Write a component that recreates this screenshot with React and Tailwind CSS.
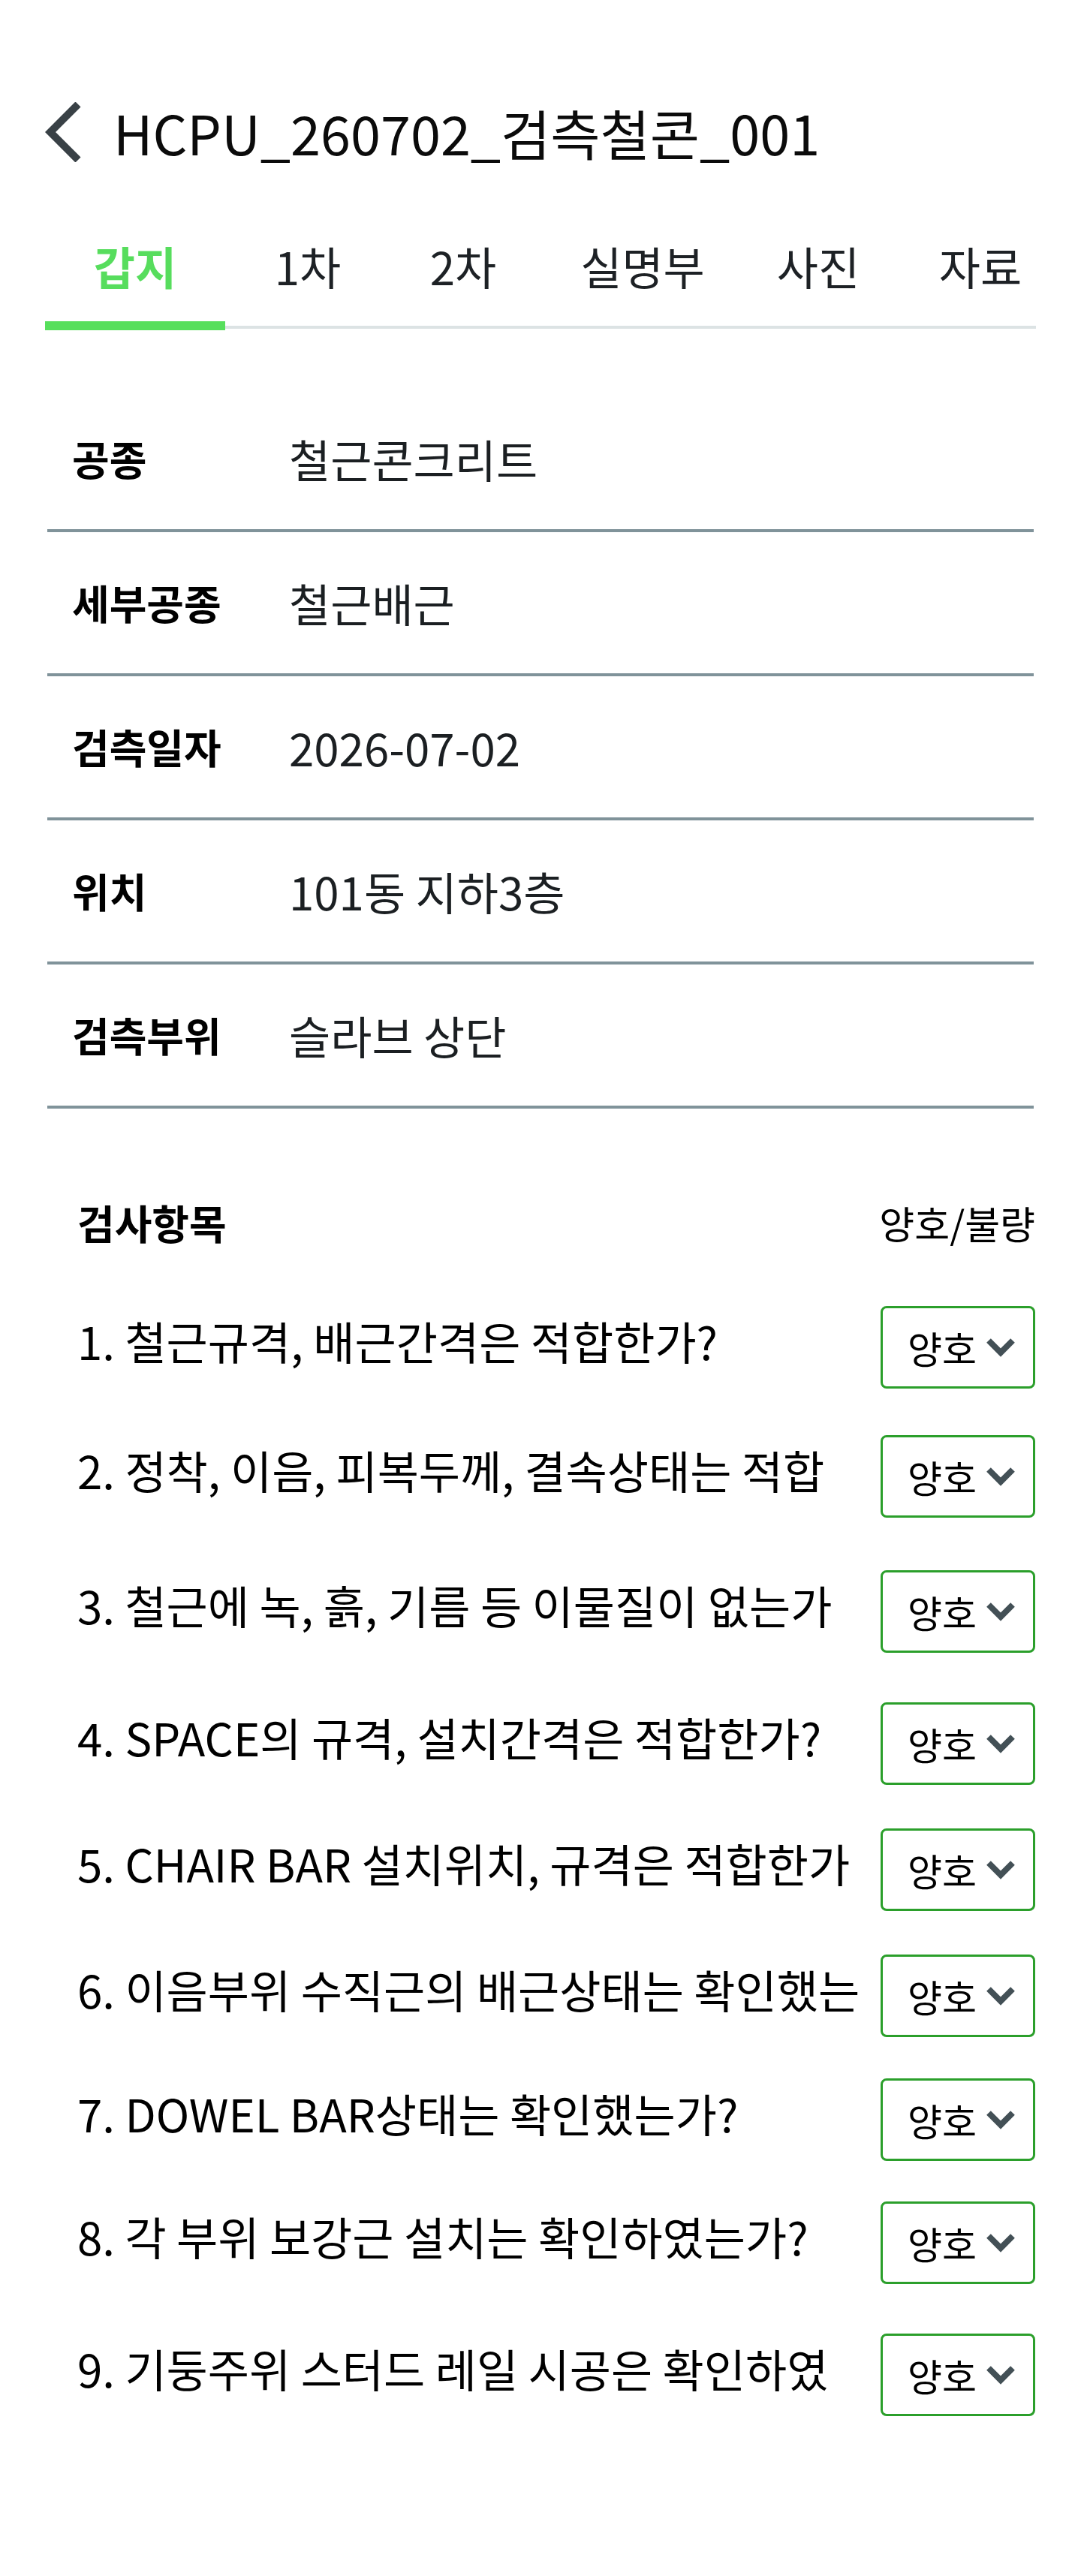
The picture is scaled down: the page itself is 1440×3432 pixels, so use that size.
import React, { useState } from "react";

const tabs = [
  { label: "갑지", width: "w-[240px]" },
  { label: "1차", width: "w-[220px]" },
  { label: "2차", width: "w-[194px]" },
  { label: "실명부", width: "w-[284px]" },
  { label: "사진", width: "w-[184px]" },
  { label: "자료", width: "w-[248px]" },
];

const info = [
  { label: "공종", value: "철근콘크리트" },
  { label: "세부공종", value: "철근배근" },
  { label: "검측일자", value: "2026-07-02" },
  { label: "위치", value: "101동 지하3층" },
  { label: "검측부위", value: "슬라브 상단" },
];

const items = [
  { text: "1. 철근규격, 배근간격은 적합한가?", gap: "mt-0" },
  { text: "2. 정착, 이음, 피복두께, 결속상태는 적합", gap: "mt-[62px]" },
  { text: "3. 철근에 녹, 흙, 기름 등 이물질이 없는가", gap: "mt-[70px]" },
  { text: "4. SPACE의 규격, 설치간격은 적합한가?", gap: "mt-[66px]" },
  { text: "5. CHAIR BAR 설치위치, 규격은 적합한가", gap: "mt-[58px]" },
  { text: "6. 이음부위 수직근의 배근상태는 확인했는", gap: "mt-[58px]" },
  { text: "7. DOWEL BAR상태는 확인했는가?", gap: "mt-[55px]" },
  { text: "8. 각 부위 보강근 설치는 확인하였는가?", gap: "mt-[54px]" },
  { text: "9. 기둥주위 스터드 레일 시공은 확인하였", gap: "mt-[66px]" },
];

const BackIcon = () => (
  <svg width="48" height="80" viewBox="0 0 48 80" fill="none">
    <polyline points="44,3 7,40 44,77" stroke="#394146" strokeWidth="10" strokeLinejoin="miter" />
  </svg>
);

const ChevronDown = () => (
  <svg width="38" height="26" viewBox="0 0 38 26" fill="none">
    <polyline points="3,4 19,20 35,4" stroke="#435056" strokeWidth="8" strokeLinejoin="miter" />
  </svg>
);

const App = () => {
  const [activeTab, setActiveTab] = useState(0);

  return (
    <div
      className="w-[1440px] min-h-[3432px] bg-white text-black"
      style={{ fontFamily: '"Noto Sans CJK KR", "Noto Sans", sans-serif' }}
    >
      {/* Header */}
      <div className="flex items-center pt-[136px] px-[60px]">
        <BackIcon />
        <h1 className="ml-[43px] text-[72px] leading-none text-[#0b0b0b]">
          HCPU_260702_검측철콘_001
        </h1>
      </div>

      {/* Tabs */}
      <div className="relative mx-[60px] mt-[102px]">
        <div className="absolute bottom-[2px] left-0 right-0 h-[4px] bg-[#dce3e4]" />
        <div className="relative flex">
          {tabs.map((tab, i) => (
            <button
              key={tab.label}
              onClick={() => setActiveTab(i)}
              className={`${tab.width} shrink-0 flex flex-col items-center`}
            >
              <span
                className={`text-[60px] leading-[1.2] ${
                  activeTab === i ? "font-bold text-[#57dd5d]" : "text-[#1d2125]"
                }`}
              >
                {tab.label}
              </span>
              <span
                className={`mt-[38px] h-[12px] w-full ${
                  activeTab === i ? "bg-[#57df5c]" : "bg-transparent"
                }`}
              />
            </button>
          ))}
        </div>
      </div>

      {/* Info table */}
      <div className="mx-[63px] mt-[77px]">
        {info.map((row) => (
          <div
            key={row.label}
            className="flex items-center h-[192px] border-b-4 border-[#80939a]"
          >
            <span className="w-[322px] pl-[33px] text-[54px] font-bold leading-none">
              {row.label}
            </span>
            <span className="text-[60px] leading-none text-[#1b1f22]">{row.value}</span>
          </div>
        ))}
      </div>

      {/* Checklist */}
      <div className="pl-[103px] pr-[61px] mt-[125px]">
        <div className="flex items-center justify-between">
          <span className="text-[54px] font-bold leading-none">검사항목</span>
          <span className="text-[51px] leading-none">양호/불량</span>
        </div>

        <div className="mt-[84px] pb-[200px]">
          {items.map((item) => (
            <div key={item.text} className={`${item.gap} flex items-center justify-between`}>
              <span className="flex-1 pb-[18px] whitespace-nowrap text-[60px] leading-[1.4]">
                {item.text}
              </span>
              <div className="shrink-0 flex items-center justify-between w-[206px] h-[110px] pl-[33px] pr-[24px] border-[3px] border-[#2b9f2b] rounded-[8px]">
                <span className="text-[50px] leading-[1.2]">양호</span>
                <ChevronDown />
              </div>
            </div>
          ))}
        </div>
      </div>
    </div>
  );
};

export default App;
